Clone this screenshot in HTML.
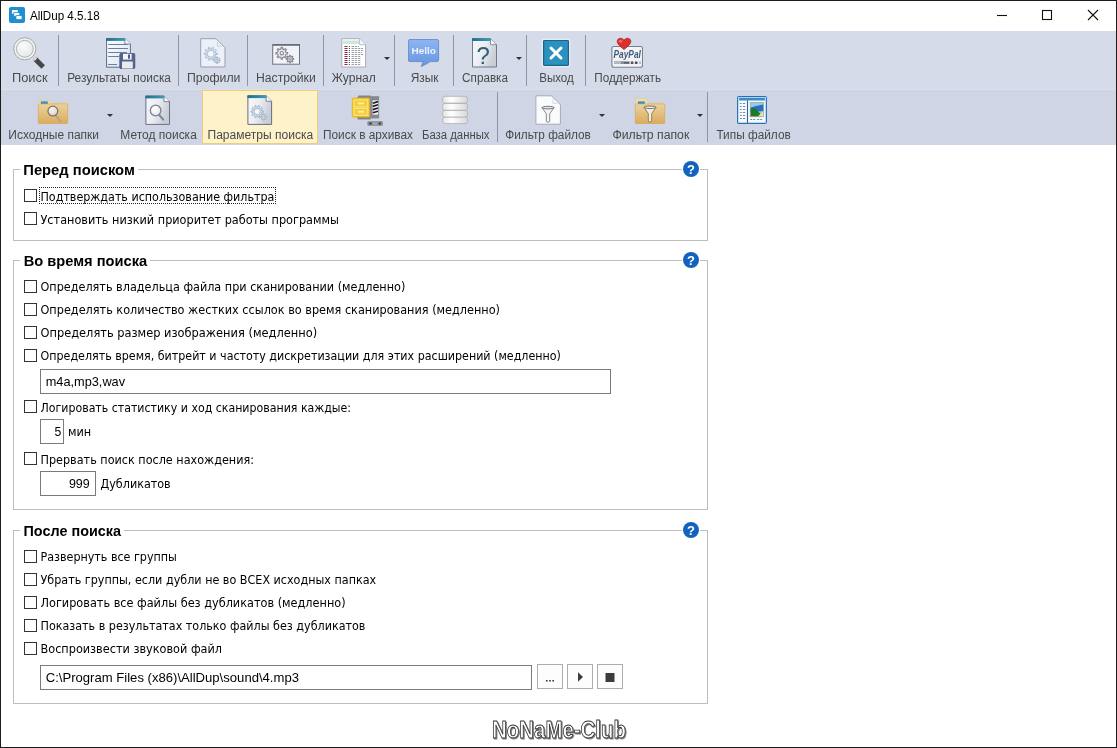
<!DOCTYPE html>
<html lang="ru"><head><meta charset="utf-8"><title>AllDup 4.5.18</title>
<style>
*{box-sizing:border-box;margin:0;padding:0}
html,body{width:1117px;height:748px;overflow:hidden;background:#fff}
body{position:relative;font-family:'Liberation Sans',sans-serif}
.abs,.ic,.cb,.inp,.btn,.grp,.sep,.gap,.arr{position:absolute}
#frame{position:absolute;left:0;top:0;width:1117px;height:748px;border:1px solid #1c1c1c;pointer-events:none;z-index:9}
#tb1{left:1px;top:31px;width:1115px;height:58px;background:#d5dbe8}
#tb2{left:1px;top:89px;width:1115px;height:56px;background:#cfd5e4}
.sep{width:1px;background:#8e94a3}
#hl{left:202px;top:90px;width:116px;height:54px;background:#fdf2c9;border:1px solid #ead07c}
.grp{border:1px solid #bdbdbd}
.gap{background:#fff;height:3px}
.cb{width:13px;height:13px;border:1px solid #333;background:#fff;left:24px}
.inp{border:1px solid #7a7a7a;background:#fff}
.btn{border:1px solid #adadad;background:#fdfdfd}
.arr{width:0;height:0;border-left:3px solid transparent;border-right:3px solid transparent;border-top:3px solid #333}
#txt{position:absolute;left:0;top:0;will-change:transform}
text{white-space:pre}
.ti{font:12px 'Liberation Sans',sans-serif;fill:#000}
.tb{font:12px 'Liberation Sans',sans-serif;fill:#4a4a4a}
.gt{font:bold 15.5px 'Liberation Sans',sans-serif;fill:#000}
.lb{font:12px 'DejaVu Sans',sans-serif;font-stretch:condensed;fill:#000}
.in{font:13px 'Liberation Sans',sans-serif;fill:#000}
.wm{font:bold 24px 'Liberation Sans',sans-serif;fill:#fff;stroke:#333;stroke-width:.9px}
  .ic{will-change:transform}
.help{font:bold 13px 'Liberation Sans',sans-serif;fill:#fff}
</style></head><body>

<svg width="0" height="0" style="position:absolute"><defs>
<linearGradient id="gdoc" x1="0" y1="0" x2="1" y2="1"><stop offset="0" stop-color="#ffffff"/><stop offset="1" stop-color="#dfe4ee"/></linearGradient>
<linearGradient id="gfold" x1="0" y1="0" x2="0" y2="1"><stop offset="0" stop-color="#ead2a0"/><stop offset="1" stop-color="#dcab5c"/></linearGradient>
<linearGradient id="ghello" x1="0" y1="0" x2="0" y2="1"><stop offset="0" stop-color="#8db5f1"/><stop offset="1" stop-color="#6795de"/></linearGradient>
<linearGradient id="gdb" x1="0" y1="0" x2="1" y2="0"><stop offset="0" stop-color="#e4e4e4"/><stop offset=".35" stop-color="#ffffff"/><stop offset="1" stop-color="#d8d8d8"/></linearGradient>
<linearGradient id="gdocb" x1="0" y1="0" x2="1" y2="1"><stop offset="0" stop-color="#ffffff"/><stop offset="1" stop-color="#d3e2f1"/></linearGradient>
<linearGradient id="gdoch" x1="0" y1="0" x2="1" y2=".4"><stop offset="0" stop-color="#f7f8fb"/><stop offset=".5" stop-color="#eceef3"/><stop offset="1" stop-color="#c9cdd6"/></linearGradient>
<linearGradient id="gteal" x1="0" y1="0" x2="1" y2="0"><stop offset="0" stop-color="#1f6f8c"/><stop offset="1" stop-color="#3f9bb5"/></linearGradient>
<radialGradient id="glens" cx=".4" cy=".35" r=".7"><stop offset="0" stop-color="#ffffff"/><stop offset="1" stop-color="#dfe6f0"/></radialGradient>
<radialGradient id="glens2" cx=".4" cy=".35" r=".7"><stop offset="0" stop-color="#fbfbfb"/><stop offset="1" stop-color="#e4e8e8"/></radialGradient>
<radialGradient id="glens3" cx=".4" cy=".35" r=".7"><stop offset="0" stop-color="#f4f4f2"/><stop offset="1" stop-color="#d4d6d2"/></radialGradient>
</defs></svg>
<div class="abs" id="tb1"></div><div class="abs" id="tb2"></div>
<div class="abs" style="left:1px;top:89px;width:1115px;height:1px;background:#dbe0eb"></div>
<div class="abs" id="hl"></div>
<svg class="ic" style="left:9px;top:7px" width="16" height="16" viewBox="0 0 16 16"><rect width="16" height="16" rx="2" fill="#1f8fd1"/><rect x="3" y="3" width="5.8" height="3.8" fill="#fff"/><rect x="4.8" y="5.6" width="6" height="3.8" fill="#fff" stroke="#1f8fd1" stroke-width=".8"/><rect x="7" y="8.6" width="6" height="4" fill="#fff" stroke="#1f8fd1" stroke-width=".8"/></svg>
<svg class="ic" style="left:990px;top:1px" width="120" height="30" viewBox="0 0 120 30"><g stroke="#111" stroke-width="1.1" fill="none"><path d="M7 14.5h10"/><rect x="52.5" y="9.5" width="9" height="9"/><path d="M98 9l10 10M108 9l-10 10"/></g></svg>
<div class="sep" style="left:58px;top:35px;height:51px"></div>
<div class="sep" style="left:178px;top:35px;height:51px"></div>
<div class="sep" style="left:247px;top:35px;height:51px"></div>
<div class="sep" style="left:323px;top:35px;height:51px"></div>
<div class="sep" style="left:394px;top:35px;height:51px"></div>
<div class="sep" style="left:453px;top:35px;height:51px"></div>
<div class="sep" style="left:526px;top:35px;height:51px"></div>
<div class="sep" style="left:585px;top:35px;height:51px"></div>
<div class="sep" style="left:497px;top:92px;height:50px"></div>
<div class="sep" style="left:707px;top:92px;height:50px"></div>
<div class="arr" style="left:384px;top:57px"></div>
<div class="arr" style="left:516px;top:57px"></div>
<div class="arr" style="left:107px;top:114px"></div>
<div class="arr" style="left:599px;top:114px"></div>
<div class="arr" style="left:697px;top:114px"></div>
<svg class="ic" style="left:13px;top:37px" width="32" height="32" viewBox="0 0 32 32"><path d="M22.2 22L30.2 30" stroke="#44474c" stroke-width="5" stroke-linecap="butt"/><path d="M19.4 19.2L23 22.8" stroke="#d4d4d4" stroke-width="3.4"/><circle cx="11.8" cy="11.8" r="11.1" fill="#f1f1ef" stroke="#a6a8a8" stroke-width="1"/><circle cx="11.8" cy="11.8" r="8.4" fill="url(#glens2)" stroke="#a9acab" stroke-width=".9"/></svg>
<svg class="ic" style="left:104px;top:37px" width="32" height="32" viewBox="0 0 32 32"><path d="M2.6 1.6H20.9L26.4 7.1V30.2H2.6Z" fill="url(#gdocb)" stroke="#5b6f8a" stroke-width="1"/><path d="M20.9 1.6V7.1H26.4" fill="#f6f8fb" stroke="#5b6f8a" stroke-width=".8"/><path d="M2.1 1.1H21.2V3.9H2.1Z" fill="url(#gteal)"/><path d="M4.2 7.5H24.0" stroke="#6f7d98" stroke-width="1"/><path d="M4.2 11.5H24.0" stroke="#6f7d98" stroke-width="1"/><path d="M4.2 15.5H23.0" stroke="#6f7d98" stroke-width="1"/><path d="M4.2 19.5H15.0" stroke="#6f7d98" stroke-width="1"/><path d="M4.2 27.5H13.0" stroke="#6f7d98" stroke-width="1"/><rect x="15.8" y="16.5" width="15" height="15" rx="1" fill="#55658a" stroke="#44537a" stroke-width=".8"/><rect x="19" y="16.8" width="8.6" height="5.8" fill="#f4f6fa"/><rect x="24" y="17.5" width="2" height="4.2" fill="#4b5c80"/><rect x="18" y="24.5" width="10.8" height="7" fill="#e9ebef"/></svg>
<svg class="ic" style="left:197px;top:37px" width="32" height="32" viewBox="0 0 32 32"><path d="M3.7 1.7H19.0L28.0 10.7V30.0H3.7Z" fill="#edf0f8" stroke="#9b9fae" stroke-width="1"/><path d="M20.5 5.2V9.2H24.5" fill="none" stroke="#9b9fae" stroke-width=".7" opacity=".6"/><path d="M18.64 16.13L20.37 16.14L20.37 17.46L18.64 17.47L18.11 19.10L19.50 20.12L18.72 21.20L17.32 20.19L15.93 21.19L16.46 22.84L15.20 23.25L14.65 21.61L12.95 21.61L12.40 23.25L11.14 22.84L11.67 21.19L10.28 20.19L8.88 21.20L8.10 20.12L9.49 19.10L8.96 17.47L7.23 17.46L7.23 16.14L8.96 16.13L9.49 14.50L8.10 13.48L8.88 12.40L10.28 13.41L11.67 12.41L11.14 10.76L12.40 10.35L12.95 11.99L14.65 11.99L15.20 10.35L16.46 10.76L15.93 12.41L17.32 13.41L18.72 12.40L19.50 13.48L18.11 14.50Z" fill="#e2eaf5" stroke="#a3b6cd" stroke-width="0.90" stroke-linejoin="round"/><circle cx="13.80" cy="16.80" r="3.50" fill="#f4f6fa" stroke="#a3b6cd" stroke-width="0.90"/><path d="M22.33 22.89L23.17 22.90L23.17 23.70L22.33 23.71L21.94 24.66L22.53 25.26L21.96 25.83L21.36 25.24L20.41 25.63L20.40 26.47L19.60 26.47L19.59 25.63L18.64 25.24L18.04 25.83L17.47 25.26L18.06 24.66L17.67 23.71L16.83 23.70L16.83 22.90L17.67 22.89L18.06 21.94L17.47 21.34L18.04 20.77L18.64 21.36L19.59 20.97L19.60 20.13L20.40 20.13L20.41 20.97L21.36 21.36L21.96 20.77L22.53 21.34L21.94 21.94Z" fill="#e6edf6" stroke="#8fa3bd" stroke-width="0.80" stroke-linejoin="round"/><circle cx="20.00" cy="23.30" r="1.10" fill="#f4f6fa" stroke="#8fa3bd" stroke-width="0.80"/></svg>
<svg class="ic" style="left:270px;top:37px" width="32" height="32" viewBox="0 0 32 32"><rect x="2.7" y="7.6" width="26.8" height="19.6" fill="#f1f3f8" stroke="#6f737d" stroke-width="1"/><path d="M2.7 8.1H29.5" stroke="#5a5d66" stroke-width="1.2"/><path d="M16.10 15.45L17.65 15.46L17.65 16.94L16.10 16.95L15.37 18.71L16.46 19.82L15.42 20.86L14.31 19.77L12.55 20.50L12.54 22.05L11.06 22.05L11.05 20.50L9.29 19.77L8.18 20.86L7.14 19.82L8.23 18.71L7.50 16.95L5.95 16.94L5.95 15.46L7.50 15.45L8.23 13.69L7.14 12.58L8.18 11.54L9.29 12.63L11.05 11.90L11.06 10.35L12.54 10.35L12.55 11.90L14.31 12.63L15.42 11.54L16.46 12.58L15.37 13.69Z" fill="#e9ebef" stroke="#888b91" stroke-width="1.15" stroke-linejoin="round"/><circle cx="11.80" cy="16.20" r="1.70" fill="#f4f6fa" stroke="#888b91" stroke-width="1.15"/><path d="M22.70 21.53L23.67 21.54L23.67 22.46L22.70 22.47L22.24 23.57L22.92 24.27L22.27 24.92L21.57 24.24L20.47 24.70L20.46 25.67L19.54 25.67L19.53 24.70L18.43 24.24L17.73 24.92L17.08 24.27L17.76 23.57L17.30 22.47L16.33 22.46L16.33 21.54L17.30 21.53L17.76 20.43L17.08 19.73L17.73 19.08L18.43 19.76L19.53 19.30L19.54 18.33L20.46 18.33L20.47 19.30L21.57 19.76L22.27 19.08L22.92 19.73L22.24 20.43Z" fill="#e9ebef" stroke="#888b91" stroke-width="1.05" stroke-linejoin="round"/><circle cx="20.00" cy="22.00" r="1.20" fill="#f4f6fa" stroke="#888b91" stroke-width="1.05"/></svg>
<svg class="ic" style="left:338px;top:37px" width="32" height="32" viewBox="0 0 32 32"><path d="M3.8 1.7H21.6L27.6 7.7V30.0H3.8Z" fill="#ffffff" stroke="#a8adb8" stroke-width="1"/><path d="M21.6 1.7V7.7H27.6" fill="#f6f8fb" stroke="#a8adb8" stroke-width=".8"/><rect x="5" y="3.5" width="16" height="3.6" fill="#cfe6d8"/><path d="M6.5 9.5H9.5" stroke="#8a2a3a" stroke-width="1"/><path d="M10.8 9.5H11.8" stroke="#2a3a5a" stroke-width="1"/><path d="M13.5 9.5H21.0" stroke="#9aa0aa" stroke-width="1" stroke-dasharray="2.4 .8"/><path d="M6.5 11.5H9.5" stroke="#8a2a3a" stroke-width="1"/><path d="M10.8 11.5H11.8" stroke="#2a3a5a" stroke-width="1"/><path d="M13.5 11.5H25.0" stroke="#9aa0aa" stroke-width="1" stroke-dasharray="2.4 .8"/><path d="M6.5 13.5H9.5" stroke="#8a2a3a" stroke-width="1"/><path d="M10.8 13.5H11.8" stroke="#2a3a5a" stroke-width="1"/><path d="M13.5 13.5H25.0" stroke="#9aa0aa" stroke-width="1" stroke-dasharray="2.4 .8"/><path d="M6.5 15.5H9.5" stroke="#8a2a3a" stroke-width="1"/><path d="M10.8 15.5H11.8" stroke="#2a3a5a" stroke-width="1"/><path d="M13.5 15.5H24.0" stroke="#9aa0aa" stroke-width="1" stroke-dasharray="2.4 .8"/><path d="M6.5 17.5H9.5" stroke="#8a2a3a" stroke-width="1"/><path d="M10.8 17.5H11.8" stroke="#2a3a5a" stroke-width="1"/><path d="M13.5 17.5H25.0" stroke="#9aa0aa" stroke-width="1" stroke-dasharray="2.4 .8"/><path d="M6.5 19.5H9.5" stroke="#8a2a3a" stroke-width="1"/><path d="M10.8 19.5H11.8" stroke="#2a3a5a" stroke-width="1"/><path d="M13.5 19.5H23.0" stroke="#9aa0aa" stroke-width="1" stroke-dasharray="2.4 .8"/><path d="M6.5 21.5H9.5" stroke="#8a2a3a" stroke-width="1"/><path d="M10.8 21.5H11.8" stroke="#2a3a5a" stroke-width="1"/><path d="M13.5 21.5H23.0" stroke="#9aa0aa" stroke-width="1" stroke-dasharray="2.4 .8"/><path d="M6.5 23.5H9.5" stroke="#8a2a3a" stroke-width="1"/><path d="M10.8 23.5H11.8" stroke="#2a3a5a" stroke-width="1"/><path d="M13.5 23.5H23.0" stroke="#9aa0aa" stroke-width="1" stroke-dasharray="2.4 .8"/><path d="M6.5 25.5H9.5" stroke="#8a2a3a" stroke-width="1"/><path d="M10.8 25.5H11.8" stroke="#2a3a5a" stroke-width="1"/><path d="M13.5 25.5H23.0" stroke="#9aa0aa" stroke-width="1" stroke-dasharray="2.4 .8"/><path d="M6.5 27.5H9.5" stroke="#8a2a3a" stroke-width="1"/><path d="M10.8 27.5H11.8" stroke="#2a3a5a" stroke-width="1"/><path d="M13.5 27.5H23.0" stroke="#9aa0aa" stroke-width="1" stroke-dasharray="2.4 .8"/></svg>
<svg class="ic" style="left:408px;top:37px" width="32" height="32" viewBox="0 0 32 32"><path d="M2 2.5H29a1.6 1.6 0 0 1 1.6 1.6V23a1.6 1.6 0 0 1-1.6 1.6H22.5L13.4 29.6L15 24.6H2A1.6 1.6 0 0 1 .4 23V4.1A1.6 1.6 0 0 1 2 2.5Z" fill="url(#ghello)" stroke="#5a86cc" stroke-width=".8"/><text x="15.7" y="17" text-anchor="middle" textLength="24.5" lengthAdjust="spacingAndGlyphs" style="font:bold 9.8px 'Liberation Sans',sans-serif;fill:#f4f8ff;fill-opacity:.92">Hello</text></svg>
<svg class="ic" style="left:468px;top:37px" width="32" height="32" viewBox="0 0 32 32"><path d="M4.5 1.7H22.5L28.5 7.7V30.0H4.5Z" fill="url(#gdoch)" stroke="#6f7a8a" stroke-width="1"/><path d="M22.5 1.7V7.7H28.5" fill="#f6f8fb" stroke="#6f7a8a" stroke-width=".8"/><path d="M4.0 1.2H22.8V4.0H4.0Z" fill="url(#gteal)"/><text x="15.3" y="27" text-anchor="middle" style="font:24px 'Liberation Sans',sans-serif;fill:#2f6075">?</text></svg>
<svg class="ic" style="left:540px;top:37px" width="32" height="32" viewBox="0 0 32 32"><rect x="2.3" y="2.2" width="27.4" height="27.4" rx="2" fill="none" stroke="#e6edfb" stroke-width="1.4" opacity=".85"/><rect x="3.6" y="3.5" width="24.8" height="24.8" rx=".7" fill="#2b92bf" stroke="#1e6284" stroke-width="1.2"/><path d="M11 11L21 21M21 11L11 21" stroke="#fff" stroke-width="3" stroke-linecap="round"/></svg>
<svg class="ic" style="left:611px;top:37px" width="32" height="32" viewBox="0 0 32 32"><rect x=".9" y="9.5" width="30.6" height="20.8" rx="2" fill="#f1f3f7" stroke="#7a808c" stroke-width="1.1"/><text x="16.2" y="21" text-anchor="middle" textLength="27.4" lengthAdjust="spacingAndGlyphs" style="font:italic bold 10.6px 'Liberation Sans',sans-serif;fill:#41597a">PayPal</text><path d="M3 25.7H18.5" stroke="#5c636c" stroke-width="2.4"/><path d="M3 25.7H10" stroke="#b9bdc4" stroke-width="2.4"/><path d="M10 25.7H13" stroke="#8a9098" stroke-width="2.4"/><path d="M19.8 25.7H22.4M23.9 25.7H26.5" stroke="#4a5058" stroke-width="2.4"/><path d="M28 25.7H30" stroke="#b4b8bf" stroke-width="2.4"/><path d="M13 12.6C8.4 8.7 6.2 6.6 6.2 4.4C6.2 2.5 7.7 1.3 9.5 1.3C11 1.3 12.3 2 13 3.3C13.7 2 15 1.3 16.5 1.3C18.3 1.3 19.8 2.5 19.8 4.4C19.8 6.6 17.6 8.7 13 12.6Z" fill="#dc3030" stroke="#a81a1a" stroke-width=".7"/><ellipse cx="9.6" cy="4.2" rx="2" ry="1.5" fill="#f07070" opacity=".8"/></svg>
<svg class="ic" style="left:37px;top:94px" width="32" height="32" viewBox="0 0 32 32"><path d="M1.3 7.4a.8 .8 0 0 1 .8-.8H12.4L14.6 9H29.9a.8 .8 0 0 1 .8 .8V13H1.3Z" fill="#ecdcb2" stroke="#dcc692" stroke-width=".5"/><rect x="3.9" y="7.4" width="6.9" height="2.6" fill="#2f93c4"/><rect x="1.3" y="9.9" width="29.4" height="19.6" rx=".9" fill="url(#gfold)" stroke="#d2a24a" stroke-width=".6"/><path d="M18.71 21.03L23.00 27.00" stroke="#b9a58a" stroke-width="2.20" stroke-linecap="round"/><circle cx="15.85" cy="17.05" r="4.90" fill="url(#glens3)" stroke="#8d7258" stroke-width="1.3"/></svg>
<svg class="ic" style="left:142px;top:94px" width="32" height="32" viewBox="0 0 32 32"><path d="M3.9 2.1H22.0L27.5 7.6V30.4H3.9Z" fill="url(#gdoch)" stroke="#66708a" stroke-width="1"/><path d="M22.0 2.1V7.6H27.5" fill="#f6f8fb" stroke="#66708a" stroke-width=".8"/><path d="M3.4 1.6H22.3V4.4H3.4Z" fill="url(#gteal)"/><path d="M16.98 20.59L21.20 25.70" stroke="#7f858f" stroke-width="2.00" stroke-linecap="round"/><circle cx="13.60" cy="16.50" r="5.30" fill="url(#glens)" stroke="#7d838e" stroke-width="1.3"/></svg>
<svg class="ic" style="left:244px;top:94px" width="32" height="32" viewBox="0 0 32 32"><path d="M3.9 1.8H22.1L27.6 7.3V30.4H3.9Z" fill="url(#gdoch)" stroke="#666e80" stroke-width="1"/><path d="M22.1 1.8V7.3H27.6" fill="#f6f8fb" stroke="#666e80" stroke-width=".8"/><path d="M3.4 1.3H22.4V4.1H3.4Z" fill="url(#gteal)"/><path d="M17.74 16.97L19.37 16.98L19.37 18.22L17.74 18.23L17.25 19.76L18.56 20.72L17.82 21.73L16.50 20.78L15.21 21.73L15.70 23.27L14.51 23.66L14.00 22.12L12.40 22.12L11.89 23.66L10.70 23.27L11.19 21.73L9.90 20.78L8.58 21.73L7.84 20.72L9.15 19.76L8.66 18.23L7.03 18.22L7.03 16.98L8.66 16.97L9.15 15.44L7.84 14.48L8.58 13.47L9.90 14.42L11.19 13.47L10.70 11.93L11.89 11.54L12.40 13.08L14.00 13.08L14.51 11.54L15.70 11.93L15.21 13.47L16.50 14.42L17.82 13.47L18.56 14.48L17.25 15.44Z" fill="#e2eaf5" stroke="#9db0c8" stroke-width="0.90" stroke-linejoin="round"/><circle cx="13.20" cy="17.60" r="3.20" fill="#f4f6fa" stroke="#9db0c8" stroke-width="0.90"/><path d="M21.93 22.59L22.77 22.60L22.77 23.40L21.93 23.41L21.54 24.36L22.13 24.96L21.56 25.53L20.96 24.94L20.01 25.33L20.00 26.17L19.20 26.17L19.19 25.33L18.24 24.94L17.64 25.53L17.07 24.96L17.66 24.36L17.27 23.41L16.43 23.40L16.43 22.60L17.27 22.59L17.66 21.64L17.07 21.04L17.64 20.47L18.24 21.06L19.19 20.67L19.20 19.83L20.00 19.83L20.01 20.67L20.96 21.06L21.56 20.47L22.13 21.04L21.54 21.64Z" fill="#e6edf6" stroke="#8fa6c0" stroke-width="0.80" stroke-linejoin="round"/><circle cx="19.60" cy="23.00" r="1.10" fill="#f4f6fa" stroke="#8fa6c0" stroke-width="0.80"/></svg>
<svg class="ic" style="left:351px;top:94px" width="32" height="32" viewBox="0 0 32 32"><path d="M7.6 1.4H19.6V25.6H7L5.8 23V4.2Z" fill="#82858a"/><rect x="19.2" y="2.2" width="8.9" height="22.2" fill="#85888e"/><rect x="21.6" y="6.4" width="5.6" height="14.2" fill="#f4f4f4"/><path d="M21.8 9.2L27 7.6M21.8 12.4L27 10.8M21.8 15.6L27 14M21.8 18.8L27 17.2" stroke="#1f2023" stroke-width="1.7"/><rect x="1.3" y="4" width="17.2" height="19" rx=".6" fill="#f1c62e" stroke="#e2b21e" stroke-width=".8"/><rect x="3" y="5.9" width="13.8" height="7" fill="#f3cf3a" stroke="#fbe88a" stroke-width="1"/><rect x="3" y="14.3" width="13.8" height="7" fill="#f3cf3a" stroke="#fbe88a" stroke-width="1"/><rect x="7" y="8.4" width="6" height="1.9" fill="#fdf0a6"/><rect x="7" y="16.8" width="6" height="1.9" fill="#fdf0a6"/><rect x="16.4" y="27.3" width="15.4" height="4.4" rx=".8" fill="#858a90"/><rect x="18.6" y="28.6" width="1.8" height="1.8" fill="#2b2d31"/><rect x="21.6" y="28.4" width="5" height="2.2" fill="#a9adb3"/><rect x="27.8" y="28.6" width="1.8" height="1.8" fill="#2b2d31"/></svg>
<svg class="ic" style="left:439px;top:94px" width="32" height="32" viewBox="0 0 32 32"><rect x="3.6" y="23.0" width="25" height="6.6" rx="2.6" ry="2.2" fill="url(#gdb)" stroke="#aeb0b4" stroke-width=".8"/><rect x="3.6" y="16.4" width="25" height="6.6" rx="2.6" ry="2.2" fill="url(#gdb)" stroke="#aeb0b4" stroke-width=".8"/><rect x="3.6" y="9.4" width="25" height="6.8" rx="2.6" ry="2.2" fill="url(#gdb)" stroke="#aeb0b4" stroke-width=".8"/><rect x="3.6" y="2.3" width="25" height="6.8" rx="2.6" ry="2.2" fill="url(#gdb)" stroke="#aeb0b4" stroke-width=".8"/></svg>
<svg class="ic" style="left:532px;top:94px" width="32" height="32" viewBox="0 0 32 32"><path d="M3.9 1.8H19.4L28.4 10.8V30.2H3.9Z" fill="#fafbfc" stroke="#a6aab4" stroke-width="1"/><path d="M20.9 5.3V9.3H24.9" fill="none" stroke="#a6aab4" stroke-width=".7" opacity=".6"/><path d="M10.0 13.6H22.0L17.7 19.8V27.6Q16.0 29.0 14.3 27.6V19.8Z" fill="#f4f4f4" stroke="#8a8a8a" stroke-width="1" stroke-linejoin="round"/><ellipse cx="16.0" cy="13.6" rx="6" ry="1.3" fill="#e6e6e6" stroke="#6a6a6a" stroke-width=".9"/></svg>
<svg class="ic" style="left:634px;top:94px" width="32" height="32" viewBox="0 0 32 32"><path d="M1.3 5.0a.8 .8 0 0 1 .8-.8H12.4L14.6 9H29.9a.8 .8 0 0 1 .8 .8V13H1.3Z" fill="#ecdcb2" stroke="#dcc692" stroke-width=".5"/><rect x="3.9" y="7.4" width="6.9" height="2.6" fill="#2f93c4"/><rect x="1.3" y="9.9" width="29.4" height="19.6" rx=".9" fill="url(#gfold)" stroke="#d2a24a" stroke-width=".6"/><path d="M10.0 13.3H22.0L17.7 19.5V27.3Q16.0 28.7 14.3 27.3V19.5Z" fill="#f7ecd6" stroke="#8f8468" stroke-width="1" stroke-linejoin="round"/><ellipse cx="16.0" cy="13.3" rx="6" ry="1.3" fill="#e6e6e6" stroke="#6a6a6a" stroke-width=".9"/></svg>
<svg class="ic" style="left:736px;top:94px" width="32" height="32" viewBox="0 0 32 32"><rect x="1.6" y="2.6" width="28.8" height="26.8" rx="1.2" fill="#f7fbff" stroke="#2c6fb0" stroke-width="1.1"/><rect x="2.6" y="3.6" width="26.8" height="24.8" fill="none" stroke="#b4dcf8" stroke-width="1"/><rect x="3.1" y="3.9" width="25.8" height="2.6" fill="#3b8acb"/><path d="M11.5 6.5V28.9" stroke="#2c62a4" stroke-width="1.1"/><path d="M3.9 9.5H9.2M3.9 12.5H9.2M3.9 15.5H9.2M3.9 18.5H9.2M3.9 21.5H9.2M3.9 24.5H9.2" stroke="#7d8797" stroke-width="1" stroke-dasharray="1.8 1.2 2.3 9"/><rect x="14.2" y="8.5" width="13.4" height="14.2" fill="#8fcdf4" stroke="#b9a27a" stroke-width=".8"/><path d="M14.6 13.5L20 12L27.2 10.5V17L14.6 18Z" fill="#2a6fc0"/><path d="M14.6 22.3V14.8C17 13.6 19.4 14.4 21.5 16.6C23.4 18.6 24.6 20 25.4 22.3Z" fill="#1f7a28"/><path d="M22 22.3L27.2 17.6V22.3Z" fill="#e4e8a0"/><path d="M14.2 25.5H26.2" stroke="#7d8797" stroke-width="1" stroke-dasharray="2 1 2 2"/></svg>
<div class="grp" style="left:13px;top:169px;width:695px;height:72px"></div>
<div class="gap" style="left:20px;top:168px;width:118px"></div>
<div class="gap" style="left:682px;top:168px;width:18px"></div>
<svg class="ic" style="left:683px;top:161px" width="16" height="16" viewBox="0 0 16 16"><circle cx="8" cy="8" r="8" fill="#1263bf"/><text class="help" x="8" y="12.8" text-anchor="middle">?</text></svg>
<div class="grp" style="left:13px;top:260px;width:695px;height:250px"></div>
<div class="gap" style="left:20px;top:259px;width:130px"></div>
<div class="gap" style="left:682px;top:259px;width:18px"></div>
<svg class="ic" style="left:683px;top:252px" width="16" height="16" viewBox="0 0 16 16"><circle cx="8" cy="8" r="8" fill="#1263bf"/><text class="help" x="8" y="12.8" text-anchor="middle">?</text></svg>
<div class="grp" style="left:13px;top:530px;width:695px;height:174px"></div>
<div class="gap" style="left:20px;top:529px;width:104px"></div>
<div class="gap" style="left:682px;top:529px;width:18px"></div>
<svg class="ic" style="left:683px;top:522px" width="16" height="16" viewBox="0 0 16 16"><circle cx="8" cy="8" r="8" fill="#1263bf"/><text class="help" x="8" y="12.8" text-anchor="middle">?</text></svg>
<div class="cb" style="top:189px"></div>
<div class="cb" style="top:212px"></div>
<div class="cb" style="top:280px"></div>
<div class="cb" style="top:303px"></div>
<div class="cb" style="top:326px"></div>
<div class="cb" style="top:349px"></div>
<div class="cb" style="top:400px"></div>
<div class="cb" style="top:452px"></div>
<div class="cb" style="top:550px"></div>
<div class="cb" style="top:573px"></div>
<div class="cb" style="top:596px"></div>
<div class="cb" style="top:619px"></div>
<div class="cb" style="top:642px"></div>
<div class="abs" style="left:39px;top:187px;width:237px;height:17px;border:1px dotted #222"></div>
<div class="inp" style="left:40px;top:369px;width:571px;height:25px"></div>
<div class="inp" style="left:40px;top:419px;width:24px;height:25px"></div>
<div class="inp" style="left:40px;top:471px;width:56px;height:25px"></div>
<div class="inp" style="left:40px;top:665px;width:492px;height:25px"></div>
<div class="btn" style="left:537px;top:664px;width:26px;height:25px"></div>
<div class="btn" style="left:567px;top:664px;width:26px;height:25px"></div>
<div class="btn" style="left:597px;top:664px;width:26px;height:25px"></div>
<svg class="ic" style="left:537px;top:664px" width="90" height="25" viewBox="0 0 90 25"><g fill="#3c3c3c"><rect x="9" y="16" width="1.6" height="1.6"/><rect x="12.2" y="16" width="1.6" height="1.6"/><rect x="15.4" y="16" width="1.6" height="1.6"/><path d="M41 8.3l5 4.7-5 4.7z"/><rect x="68.5" y="9" width="9" height="9"/></g></svg>
<svg id="txt" width="1117" height="748" viewBox="0 0 1117 748">
<text class="ti" x="29.90" y="19.50" textLength="69.70" lengthAdjust="spacingAndGlyphs">AllDup 4.5.18</text>
<text class="tb" x="12.00" y="81.50" textLength="35.60" lengthAdjust="spacingAndGlyphs">Поиск</text>
<text class="tb" x="67.20" y="81.50" textLength="103.80" lengthAdjust="spacingAndGlyphs">Результаты поиска</text>
<text class="tb" x="187.00" y="81.50" textLength="53.40" lengthAdjust="spacingAndGlyphs">Профили</text>
<text class="tb" x="256.00" y="81.50" textLength="59.70" lengthAdjust="spacingAndGlyphs">Настройки</text>
<text class="tb" x="331.80" y="81.50" textLength="44.10" lengthAdjust="spacingAndGlyphs">Журнал</text>
<text class="tb" x="410.70" y="81.50" textLength="27.80" lengthAdjust="spacingAndGlyphs">Язык</text>
<text class="tb" x="462.10" y="81.50" textLength="45.90" lengthAdjust="spacingAndGlyphs">Справка</text>
<text class="tb" x="539.20" y="81.50" textLength="34.60" lengthAdjust="spacingAndGlyphs">Выход</text>
<text class="tb" x="594.30" y="81.50" textLength="66.70" lengthAdjust="spacingAndGlyphs">Поддержать</text>
<text class="tb" x="8.30" y="138.50" textLength="90.70" lengthAdjust="spacingAndGlyphs">Исходные папки</text>
<text class="tb" x="120.30" y="138.50" textLength="76.50" lengthAdjust="spacingAndGlyphs">Метод поиска</text>
<text class="tb" x="207.50" y="138.50" textLength="105.70" lengthAdjust="spacingAndGlyphs">Параметры поиска</text>
<text class="tb" x="323.00" y="138.50" textLength="90.00" lengthAdjust="spacingAndGlyphs">Поиск в архивах</text>
<text class="tb" x="422.00" y="138.50" textLength="67.50" lengthAdjust="spacingAndGlyphs">База данных</text>
<text class="tb" x="505.30" y="138.50" textLength="85.50" lengthAdjust="spacingAndGlyphs">Фильтр файлов</text>
<text class="tb" x="612.40" y="138.50" textLength="76.90" lengthAdjust="spacingAndGlyphs">Фильтр папок</text>
<text class="tb" x="716.40" y="138.50" textLength="74.40" lengthAdjust="spacingAndGlyphs">Типы файлов</text>
<text class="gt" x="23.30" y="175.00" textLength="111.50" lengthAdjust="spacingAndGlyphs">Перед поиском</text>
<text class="gt" x="23.70" y="266.00" textLength="123.50" lengthAdjust="spacingAndGlyphs">Во время поиска</text>
<text class="gt" x="23.50" y="536.00" textLength="97.50" lengthAdjust="spacingAndGlyphs">После поиска</text>
<text class="lb" x="40.50" y="201.00" textLength="233.90" lengthAdjust="spacingAndGlyphs">Подтверждать использование фильтра</text>
<text class="lb" x="40.50" y="224.00" textLength="298.40" lengthAdjust="spacingAndGlyphs">Установить низкий приоритет работы программы</text>
<text class="lb" x="40.50" y="291.00" textLength="364.80" lengthAdjust="spacingAndGlyphs">Определять владельца файла при сканировании (медленно)</text>
<text class="lb" x="40.50" y="314.00" textLength="459.50" lengthAdjust="spacingAndGlyphs">Определять количество жестких ссылок во время сканирования (медленно)</text>
<text class="lb" x="40.50" y="337.00" textLength="276.60" lengthAdjust="spacingAndGlyphs">Определять размер изображения (медленно)</text>
<text class="lb" x="40.50" y="360.00" textLength="520.40" lengthAdjust="spacingAndGlyphs">Определять время, битрейт и частоту дискретизации для этих расширений (медленно)</text>
<text class="lb" x="40.50" y="412.00" textLength="310.50" lengthAdjust="spacingAndGlyphs">Логировать статистику и ход сканирования каждые:</text>
<text class="lb" x="40.50" y="464.00" textLength="213.50" lengthAdjust="spacingAndGlyphs">Прервать поиск после нахождения:</text>
<text class="lb" x="40.50" y="561.00" textLength="136.40" lengthAdjust="spacingAndGlyphs">Развернуть все группы</text>
<text class="lb" x="40.50" y="584.00" textLength="335.70" lengthAdjust="spacingAndGlyphs">Убрать группы, если дубли не во ВСЕХ исходных папках</text>
<text class="lb" x="40.50" y="607.00" textLength="305.10" lengthAdjust="spacingAndGlyphs">Логировать все файлы без дубликатов (медленно)</text>
<text class="lb" x="40.50" y="630.00" textLength="324.90" lengthAdjust="spacingAndGlyphs">Показать в результатах только файлы без дубликатов</text>
<text class="lb" x="40.50" y="653.00" textLength="181.50" lengthAdjust="spacingAndGlyphs">Воспроизвести звуковой файл</text>
<text class="lb" x="67.90" y="436.00" textLength="23.30" lengthAdjust="spacingAndGlyphs">мин</text>
<text class="lb" x="100.50" y="488.00" textLength="70.20" lengthAdjust="spacingAndGlyphs">Дубликатов</text>
<text class="in" x="45.70" y="386.20" textLength="79.40" lengthAdjust="spacingAndGlyphs">m4a,mp3,wav</text>
<text class="in" x="54.40" y="436.00" textLength="6.80" lengthAdjust="spacingAndGlyphs">5</text>
<text class="in" x="68.90" y="488.00" textLength="20.80" lengthAdjust="spacingAndGlyphs">999</text>
<text class="in" x="45.70" y="681.70" textLength="253.30" lengthAdjust="spacingAndGlyphs">C:\Program Files (x86)\AllDup\sound\4.mp3</text>
<defs><filter id="wms" x="-5%" y="-20%" width="110%" height="150%"><feOffset in="SourceAlpha" dx="1" dy="1" result="o"/><feFlood flood-color="#7d7d7d"/><feComposite in2="o" operator="in"/><feMerge><feMergeNode/><feMergeNode in="SourceGraphic"/></feMerge></filter></defs>
<text class="wm" filter="url(#wms)" x="492" y="738" textLength="134" lengthAdjust="spacingAndGlyphs">NoNaMe-Club</text>
</svg>
<div id="frame"></div>
</body></html>
